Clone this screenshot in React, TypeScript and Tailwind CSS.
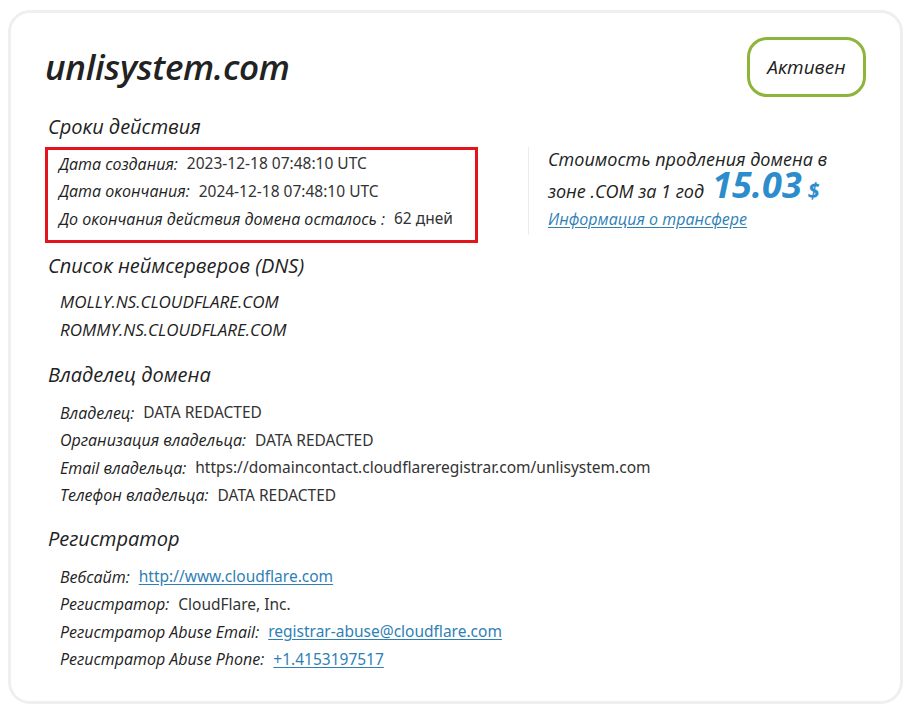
import React from 'react'

const LABEL = "font-['Open_Sans',sans-serif] italic font-medium text-[#222] text-[16px]"
const VALUE = "font-['Noto_Sans',sans-serif] text-[#333] text-[15.5px]"
const LINK = "font-['Noto_Sans',sans-serif] text-[15.5px] text-[#2f7fb5] underline underline-offset-2"

type Row = { label: string; value: string; href?: boolean }

function InfoRow({ label, value, href }: Row) {
  return (
    <div className="flex items-center h-[27.5px] whitespace-nowrap">
      <span className={LABEL}>{label}</span>
      <span className="w-[9px]" />
      {href ? <a className={LINK}>{value}</a> : <span className={VALUE}>{value}</span>}
    </div>
  )
}

function Heading({ children, className = '' }: { children: React.ReactNode; className?: string }) {
  return (
    <h2
      className={`font-['Open_Sans',sans-serif] italic text-[20px] leading-[30px] text-[#222] pl-[3px] ${className}`}
    >
      {children}
    </h2>
  )
}

export default function App() {
  return (
    <div className="w-[910px] h-[710px] bg-white pt-[10px] pl-[8px]">
      <div className="w-[895px] h-[694px] border-[3px] border-[#efefef] rounded-[22px] pl-[34px] pr-[34px] pt-[24px]">
        {/* header */}
        <div className="flex items-center justify-between">
          <h1 className="font-['Open_Sans',sans-serif] italic font-semibold text-[35px] leading-[40px] text-[#222] tracking-[-0.3px]">
            unlisystem.com
          </h1>
          <div className="w-[119px] h-[60px] border-[3px] border-[#8db53c] rounded-[20px] flex items-center justify-center">
            <span className="font-['Open_Sans',sans-serif] italic font-medium text-[19px] text-[#222]">Активен</span>
          </div>
        </div>

        <Heading className="mt-[15px]">Сроки действия</Heading>

        <div className="flex mt-[5px]">
          <div className="w-[433px] h-[96px] border-[3px] border-[#e3141b] pl-[11px]">
            <InfoRow label="Дата создания:" value="2023-12-18 07:48:10 UTC" />
            <InfoRow label="Дата окончания:" value="2024-12-18 07:48:10 UTC" />
            <InfoRow label="До окончания действия домена осталось :" value="62 дней" />
          </div>
          <div className="ml-[50px] h-[88px] border-l border-[#ececec] pl-[19px]">
            <p className="font-['Open_Sans',sans-serif] italic font-medium text-[18px] leading-[24px] text-[#222]">
              Стоимость продления домена в
            </p>
            <p className="font-['Open_Sans',sans-serif] italic font-medium text-[18px] leading-[27px] text-[#222] h-[27px] flex items-baseline">
              зоне .COM за 1 год
              <span className="ml-[8px] text-[36px] leading-[27px] font-bold text-[#2d8ccb]">15.03</span>
              <span className="ml-[6px] text-[21px] leading-[27px] font-bold text-[#2d8ccb]">$</span>
            </p>
            <a className="block mt-[8px] font-['Open_Sans',sans-serif] italic font-medium text-[16px] leading-[26px] text-[#2f7fb5] underline underline-offset-2">
              Информация о трансфере
            </a>
          </div>
        </div>

        <Heading className="mt-[8px]">Список неймсерверов (DNS)</Heading>
        <div className="pl-[15px] mt-[7px]">
          <div className="font-['Open_Sans',sans-serif] italic text-[17px] text-[#222] h-[27.5px] flex items-center">MOLLY.NS.CLOUDFLARE.COM</div>
          <div className="font-['Open_Sans',sans-serif] italic text-[17px] text-[#222] h-[27.5px] flex items-center">ROMMY.NS.CLOUDFLARE.COM</div>
        </div>

        <Heading className="mt-[17px]">Владелец домена</Heading>
        <div className="pl-[15px] mt-[9px]">
          <InfoRow label="Владелец:" value="DATA REDACTED" />
          <InfoRow label="Организация владельца:" value="DATA REDACTED" />
          <InfoRow label="Email владельца:" value="https://domaincontact.cloudflareregistrar.com/unlisystem.com" />
          <InfoRow label="Телефон владельца:" value="DATA REDACTED" />
        </div>

        <Heading className="mt-[15px]">Регистратор</Heading>
        <div className="pl-[15px] mt-[9px]">
          <InfoRow label="Вебсайт:" value="http://www.cloudflare.com" href />
          <InfoRow label="Регистратор:" value="CloudFlare, Inc." />
          <InfoRow label="Регистратор Abuse Email:" value="registrar-abuse@cloudflare.com" href />
          <InfoRow label="Регистратор Abuse Phone:" value="+1.4153197517" href />
        </div>
      </div>
    </div>
  )
}
